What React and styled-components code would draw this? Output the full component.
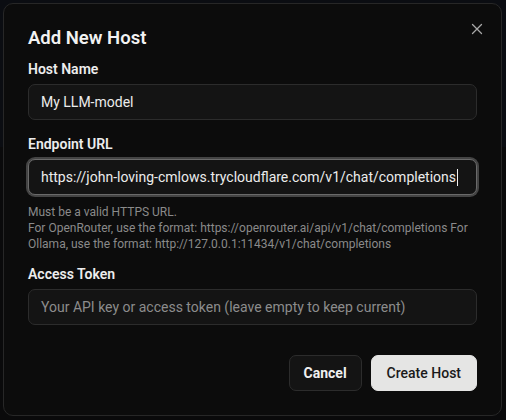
import React from 'react';
import styled, { createGlobalStyle } from 'styled-components';

const GlobalStyle = createGlobalStyle`
  html, body {
    margin: 0;
    padding: 0;
    background: #0a0a0b;
    font-family: Roboto, 'Noto Sans', sans-serif;
  }
  * { box-sizing: border-box; }
`;

const Page = styled.div`
  width: 506px;
  height: 420px;
  padding: 3px 4px 4px 3px;
  background: linear-gradient(#0b0d12 0 147px, #0a0a0b 147px);
`;

const Dialog = styled.div`
  position: relative;
  height: 100%;
  background: #0c0c0c;
  border: 1px solid #272727;
  border-radius: 10px;
  padding: 21px 24px 24px 24px;
  display: flex;
  flex-direction: column;
`;

const Title = styled.h2`
  margin: 0 0 8px;
  font-size: 18.5px;
  line-height: 26px;
  font-weight: 600;
  color: #f2f2f2;
`;

const CloseButton = styled.button`
  position: absolute;
  top: 15px;
  right: 14px;
  width: 20px;
  height: 20px;
  padding: 0;
  border: none;
  background: transparent;
  color: #a8a8a8;
  display: flex;
  align-items: center;
  justify-content: center;
`;

const Field = styled.div`
  display: flex;
  flex-direction: column;
  gap: 5px;
  margin-bottom: ${(p) => p.$mb ?? 14}px;
`;

const Label = styled.label`
  font-size: 14px;
  line-height: 20px;
  font-weight: 600;
  color: #ededed;
`;

const Input = styled.div`
  height: 36px;
  display: flex;
  align-items: center;
  padding: 0 12px;
  background: #141414;
  border: 1px solid ${(p) => (p.$focus ? '#6a6a6a' : '#2c2c2c')};
  border-radius: 7px;
  font-size: 14px;
  color: ${(p) => (p.$placeholder ? '#8c8c8c' : '#ececec')};
  white-space: nowrap;
  box-shadow: ${(p) => (p.$focus ? '0 0 0 2px #444' : 'none')};
`;

const Caret = styled.span`
  display: inline-block;
  width: 1px;
  height: 17px;
  background: #f0f0f0;
  margin-left: 1px;
`;

const Help = styled.p`
  margin: 4px 0 0;
  font-size: 12px;
  line-height: 16px;
  color: #8a8a8a;
`;

const Footer = styled.div`
  margin-top: auto;
  display: flex;
  justify-content: flex-end;
  gap: 9px;
`;

const Button = styled.button`
  height: 36px;
  padding: 0 ${(p) => (p.$primary ? 15 : 14)}px;
  border-radius: 7px;
  font-family: inherit;
  font-size: 14px;
  font-weight: ${(p) => (p.$primary ? 500 : 700)};
  color: ${(p) => (p.$primary ? '#1a1a1a' : '#f0f0f0')};
  background: ${(p) => (p.$primary ? '#e5e5e4' : '#141414')};
  border: 1px solid ${(p) => (p.$primary ? '#e5e5e4' : '#2c2c2c')};
`;

export default function App() {
  return (
    <>
      <GlobalStyle />
      <Page>
        <Dialog>
          <CloseButton aria-label="Close">
            <svg width="12" height="12" viewBox="0 0 12 12" fill="none" stroke="currentColor" strokeWidth="1.3" strokeLinecap="round">
              <path d="M1.5 1.5l9 9M10.5 1.5l-9 9" />
            </svg>
          </CloseButton>
          <Title>Add New Host</Title>

          <Field>
            <Label>Host Name</Label>
            <Input>My LLM-model</Input>
          </Field>

          <Field $mb={12}>
            <Label>Endpoint URL</Label>
            <Input $focus>
              https://john-loving-cmlows.trycloudflare.com/v1/chat/completions
              <Caret />
            </Input>
            <Help>
              Must be a valid HTTPS URL.
              <br />
              For OpenRouter, use the format: https://openrouter.ai/api/v1/chat/completions For
              Ollama, use the format: http://127.0.0.1:11434/v1/chat/completions
            </Help>
          </Field>

          <Field $mb={0}>
            <Label>Access Token</Label>
            <Input $placeholder>Your API key or access token (leave empty to keep current)</Input>
          </Field>

          <Footer>
            <Button>Cancel</Button>
            <Button $primary>Create Host</Button>
          </Footer>
        </Dialog>
      </Page>
    </>
  );
}
